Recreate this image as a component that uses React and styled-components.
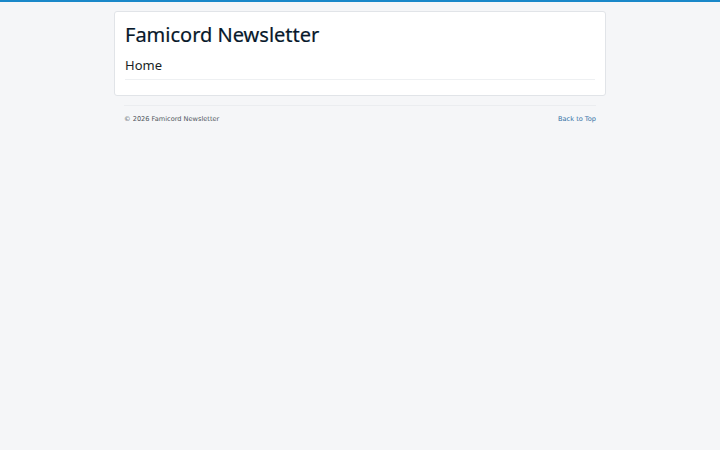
import React from "react";
import styled, { createGlobalStyle } from "styled-components";

const Global = createGlobalStyle`
  html, body { margin: 0; padding: 0; }
  body {
    background: #f5f6f8;
    border-top: 2px solid #1a88c9;
    min-height: 448px;
    font-family: "DejaVu Sans", sans-serif;
  }
`;

const Wrap = styled.div`
  width: 492px;
  margin: 9px auto 0;
`;

const Card = styled.header`
  background: #fff;
  border: 1px solid #e1e4e8;
  border-radius: 3px;
  padding: 10px 10px 15px;
`;

const Title = styled.h1`
  margin: 0;
  font-family: "Noto Sans", sans-serif;
  font-weight: 400;
  font-size: 20px;
  line-height: 26px;
  color: #07182a;
  -webkit-text-stroke: 0.2px #07182a;
`;

const Nav = styled.nav`
  margin-top: 8px;
  padding-bottom: 5px;
  border-bottom: 1px solid #eef0f2;
  font-family: "Noto Sans", sans-serif;
  font-weight: 400;
  font-size: 13px;
  line-height: 18px;
  color: #1a1f26;
`;

const Footer = styled.footer`
  margin: 9px 10px 0;
  border-top: 1px solid #ebedf0;
  padding-top: 8px;
  display: flex;
  justify-content: space-between;
  font-size: 6.6px;
  line-height: 10px;
`;

const Copy = styled.span`
  color: #50565e;
`;

const TopLink = styled.a`
  color: #3673a6;
  text-decoration: none;
`;

export default function App() {
  return (
    <>
      <Global />
      <Wrap>
        <Card>
          <Title>Famicord Newsletter</Title>
          <Nav>Home</Nav>
        </Card>
        <Footer>
          <Copy>© 2026 Famicord Newsletter</Copy>
          <TopLink href="#">Back to Top</TopLink>
        </Footer>
      </Wrap>
    </>
  );
}
